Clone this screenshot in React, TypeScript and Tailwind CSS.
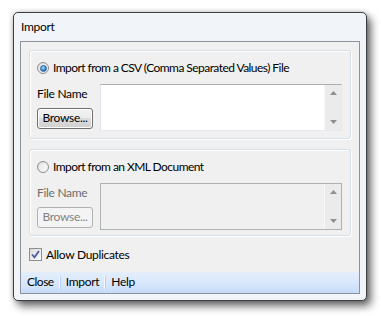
const font = "font-['Lato',sans-serif] text-[12px] tracking-[-0.3px] text-black";

function Radio({ checked, disabled }: { checked?: boolean; disabled?: boolean }) {
  return (
    <span className="flex h-[12px] w-[12px] shrink-0 items-center justify-center rounded-full border border-[#8e8f8f] bg-gradient-to-br from-[#d8d8d8] to-[#f8f8f8]">
      <span className="flex h-[8px] w-[8px] items-center justify-center rounded-full bg-gradient-to-br from-[#e6e6e6] to-[#fbfbfb]">
        {checked && !disabled && (
          <span className="h-[7px] w-[7px] rounded-full border border-[#2a5e99] bg-[radial-gradient(circle_at_40%_35%,#a6e4ff,#2c84d6_60%,#1a5ea8)]" />
        )}
      </span>
    </span>
  );
}

function Arrow({ up }: { up?: boolean }) {
  return (
    <svg width="7" height="4" viewBox="0 0 7 4">
      {up ? <path d="M3.5 0 L7 4 L0 4 Z" fill="#8f8f8f" /> : <path d="M0 0 L7 0 L3.5 4 Z" fill="#8f8f8f" />}
    </svg>
  );
}

function FileBox({ disabled }: { disabled?: boolean }) {
  return (
    <div
      className={
        "flex h-[47px] w-[242px] border " +
        (disabled
          ? "border-[#adb2b5] bg-[#f0f0f0]"
          : "border-[#abadb3] border-r-[#e3e9ef] border-b-[#e3e9ef] border-l-[#e2e3ea] bg-white")
      }
    >
      <div className="flex-1" />
      <div className="flex w-[17px] flex-col items-center justify-between border-l border-[#f8f8f8] bg-[#ebebeb] py-[6px]">
        <Arrow up />
        <Arrow />
      </div>
    </div>
  );
}

function BrowseButton({ disabled }: { disabled?: boolean }) {
  return (
    <div
      className={
        "flex h-[21px] w-[56px] items-center justify-center rounded-[3px] border pb-[1px] " +
        (disabled
          ? "border-[#adb2b5] bg-[#f4f4f4] text-[#838383]"
          : "border-[#707070] bg-[linear-gradient(#f2f2f2,#ebebeb_50%,#dddddd_50%,#cfcfcf)] shadow-[inset_0_0_0_1px_#fcfcfc]")
      }
    >
      Browse...
    </div>
  );
}

function Group({ label, checked, disabled, h }: { label: string; checked?: boolean; disabled?: boolean; h: string }) {
  return (
    <div className={"mx-[8px] rounded-[3px] border border-[#d5dfe5] shadow-[inset_1px_1px_0_#fff,1px_1px_0_#fff] pl-[7px] " + h}>
      <div className="mt-[10px] flex h-[14px] items-center gap-[4px]">
        <Radio checked={checked} disabled={disabled} />
        <span className="tracking-[-0.55px]">{label}</span>
      </div>
      <div className="mt-[9px] flex">
        <div className="w-[63px]">
          <div className={"mt-[3px] h-[14px] leading-[14px] " + (disabled ? "text-[#6d6d6d]" : "")}>File Name</div>
          <div className="mt-[7px]">
            <BrowseButton disabled={disabled} />
          </div>
        </div>
        <FileBox disabled={disabled} />
      </div>
    </div>
  );
}

export default function App() {
  return (
    <div className={"h-[316px] w-[381px] bg-white pl-[13px] pt-[12px] " + font}>
      <div className="flex h-[289px] w-[354px] flex-col rounded-[5px] border border-[#3e3e3e] bg-[#f1f5fa] px-[6px] pb-[6px] shadow-[4px_5px_9px_rgba(0,0,0,0.6),0_0_5px_rgba(0,0,0,0.2)]">
        <div className="flex h-[28px] items-center pl-[1px] leading-none">Import</div>
        <div className="flex flex-1 flex-col border border-[#8c939b] bg-[#f0f0f0]">
          <div className="h-[8px]" />
          <Group label="Import from a CSV (Comma Separated Values) File" checked h="h-[89px]" />
          <div className="h-[10px]" />
          <Group label="Import from an XML Document" disabled h="h-[87px]" />
          <div className="ml-[8px] mt-[12px] flex h-[13px] items-center gap-[4px]">
            <span className="flex h-[13px] w-[13px] items-center justify-center border border-[#8e8f8f] bg-[linear-gradient(135deg,#dcdcdc,#fbfbfb)]">
              <svg width="9" height="9" viewBox="0 0 9 9">
                <path d="M1 4.5 L3.5 7.3 L8 1" fill="none" stroke="#4a5f97" strokeWidth="1.8" />
              </svg>
            </span>
            <span>Allow Duplicates</span>
          </div>
          <div className="mt-auto flex h-[21px] items-center gap-[5px] bg-[linear-gradient(#e4eefb,#d6e6fb_60%,#c5dbf9)] pb-[1px] pl-[6px]">
            <span className="tracking-[-0.5px]">Close</span>
            <span className="h-[13px] w-px bg-[#f4f8fe] shadow-[1px_0_0_#b9d0ee]" />
            <span className="ml-[1px]">Import</span>
            <span className="h-[13px] w-px bg-[#f4f8fe] shadow-[1px_0_0_#b9d0ee]" />
            <span className="ml-[1px]">Help</span>
          </div>
        </div>
      </div>
    </div>
  );
}
